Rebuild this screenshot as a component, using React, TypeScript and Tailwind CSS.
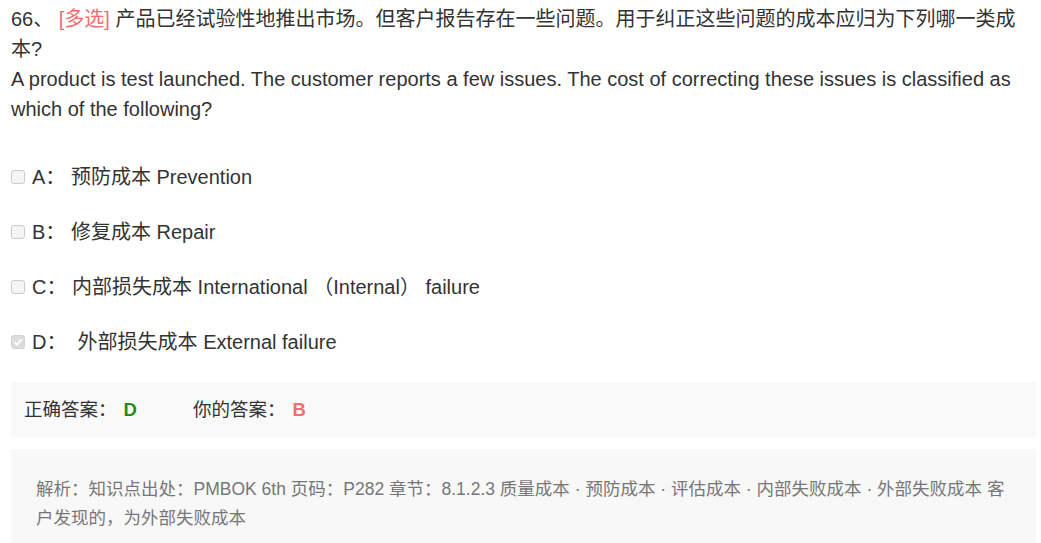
import React from 'react';

const options = [
  { key: 'A', text: '预防成本 Prevention', checked: false, gap: ' ' },
  { key: 'B', text: '修复成本 Repair', checked: false, gap: ' ' },
  { key: 'C', text: '内部损失成本 International （Internal） failure', checked: false, gap: ' ' },
  { key: 'D', text: '外部损失成本 External failure', checked: true, gap: '  ' },
];

const Checkbox: React.FC<{ checked: boolean }> = ({ checked }) => (
  <span
    className={
      'inline-flex items-center justify-center w-[14px] h-[14px] rounded-[3px] border shrink-0 ' +
      (checked ? 'bg-[#dcdcdc] border-[#d3d3d3]' : 'bg-[#f5f5f5] border-[#cbcbcb]')
    }
  >
    {checked && (
      <svg width="10" height="10" viewBox="0 0 10 10">
        <path d="M1.5 5.2 L4 7.6 L8.6 2.4" stroke="#ffffff" strokeWidth="1.8" fill="none" />
      </svg>
    )}
  </span>
);

const App: React.FC = () => {
  return (
    <div
      className="w-[1041px] h-[543px] overflow-hidden bg-white text-[#333] pl-[11px] pr-[5px] pt-[4px]"
      style={{ fontFamily: '"Liberation Sans", Arial, "Noto Sans CJK SC", sans-serif' }}
    >
      {/* Question */}
      <div className="text-[20px] leading-[30px]">
        <div>
          66、 <span className="text-[#f56c6c]">[多选]</span> 产品已经试验性地推出市场。但客户报告存在一些问题。用于纠正这些问题的成本应归为下列哪一类成本?
        </div>
        <div>
          A product is test launched. The customer reports a few issues. The cost of correcting these issues is classified as which of the following?
        </div>
      </div>

      {/* Options */}
      <div className="mt-[38px] flex flex-col gap-[25px] text-[20px] leading-[30px]">
        {options.map((o) => (
          <label key={o.key} className="flex items-center gap-[7px]">
            <Checkbox checked={o.checked} />
            <span className="whitespace-pre">
              {o.key}：{o.gap}
              {o.text}
            </span>
          </label>
        ))}
      </div>

      {/* Answers */}
      <div className="mt-[25px] w-[1025px] h-[55px] bg-[#f9f9f9] flex items-center pl-[13px] text-[18.5px]">
        <span>正确答案：</span>
        <span className="font-bold text-[#1a8e1a] ml-[7px]">D</span>
        <span className="ml-[56px]">你的答案：</span>
        <span className="font-bold text-[#f56c6c] ml-[7px]">B</span>
      </div>

      {/* Analysis */}
      <div className="mt-[12px] w-[1025px] h-[120px] bg-[#f8f8f8] pt-[26px] pl-[25px] pr-[20px] text-[17.5px] leading-[29px] text-[#777]">
        解析：知识点出处：PMBOK 6th 页码：P282 章节：8.1.2.3 质量成本 · 预防成本 · 评估成本 · 内部失败成本 · 外部失败成本 客户发现的，为外部失败成本
      </div>
    </div>
  );
};

export default App;
